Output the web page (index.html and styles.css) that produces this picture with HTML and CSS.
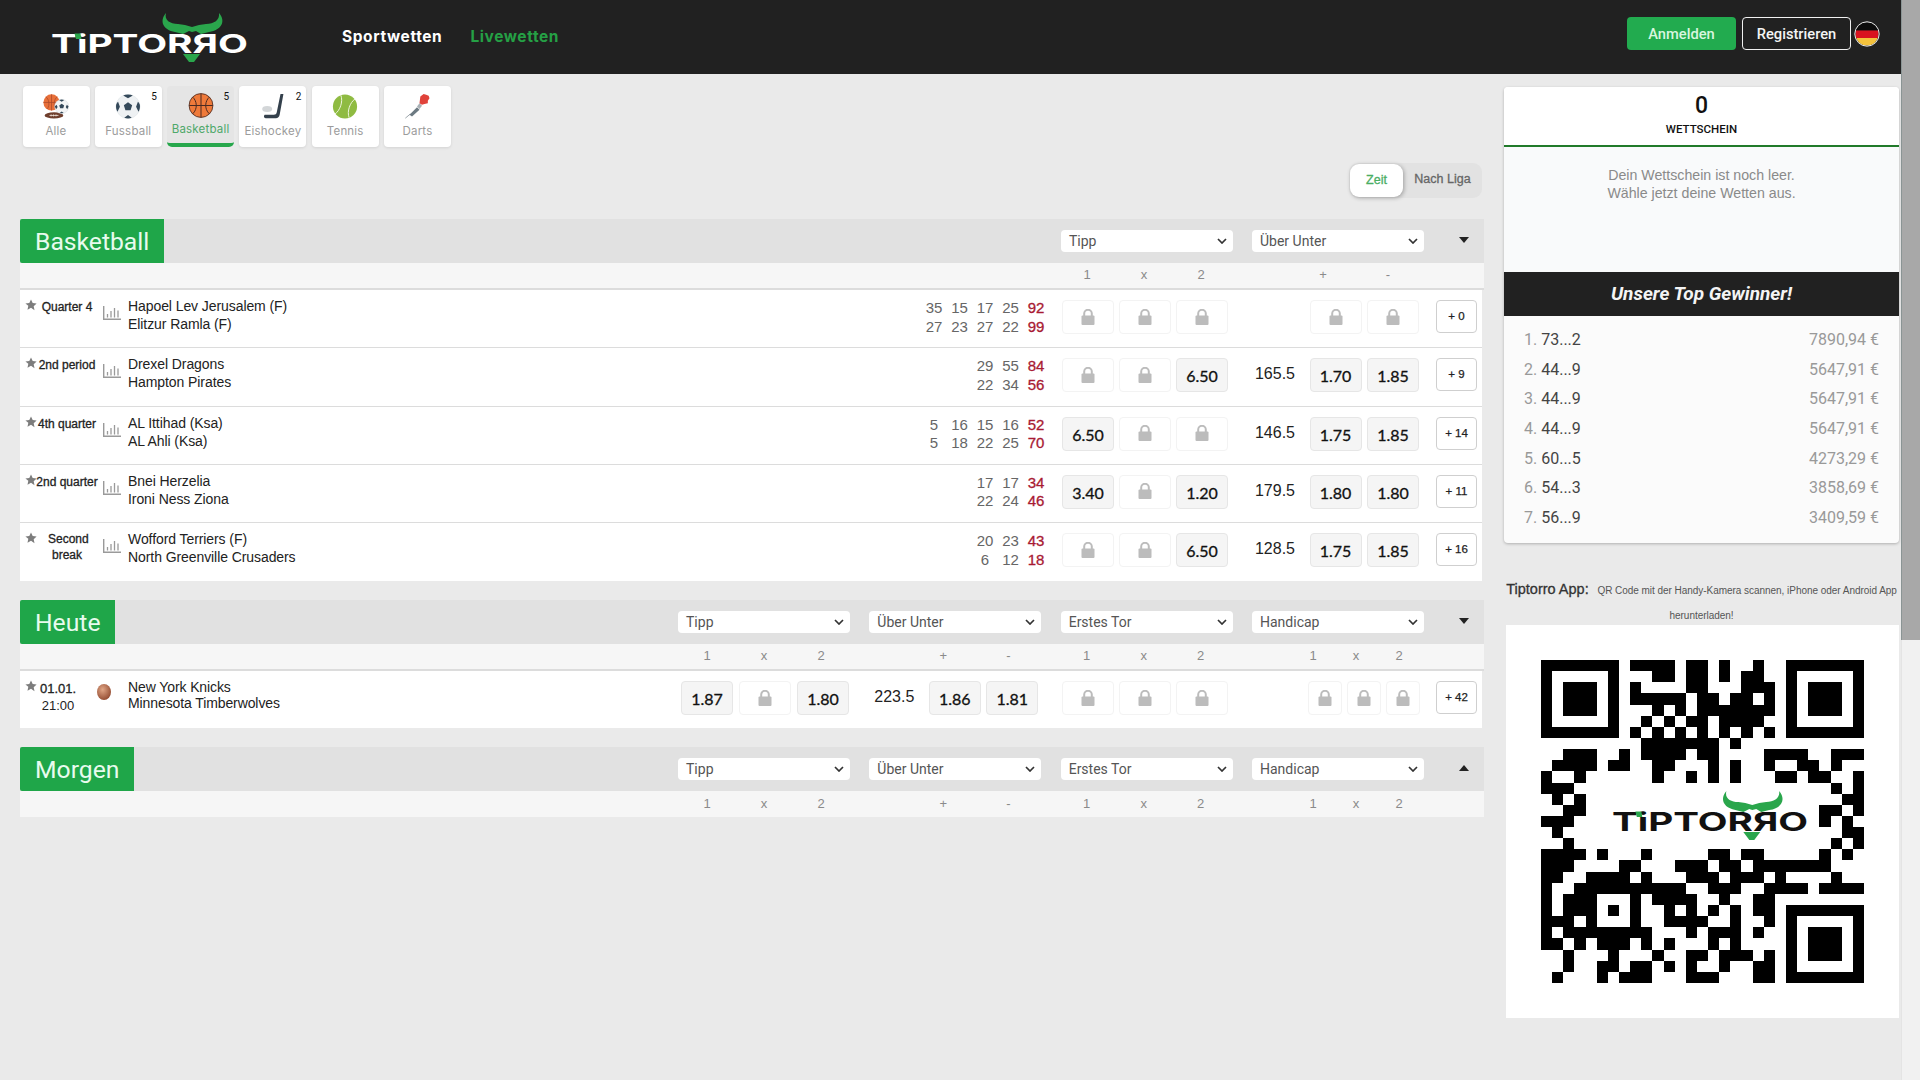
FILE: index.html
```html
<!DOCTYPE html>
<html lang="de">
<head>
<meta charset="utf-8">
<title>Tiptorro Livewetten</title>
<link rel="stylesheet" href="styles.css">
</head>
<body>
<svg class="defs" width="0" height="0">
  <defs>
    <symbol id="logo" viewBox="0 0 197 49">
      <path class="logo-green" d="M115 0C108 8 112 17 124 19L132 21L138 18L141 19L145 18L150 21L158 19C171 17 175 8 168 0C169 7 163 11 155 11L148 12L141 14L134 12L127 11C119 11 113 7 115 0Z"/>
      <text x="0" y="40" textLength="197" lengthAdjust="spacingAndGlyphs" class="logo-text">TiPTORЯO</text>
      <path class="logo-green" d="M23.500 20.500h6l1 5.500h-5.500z"/>
      <path class="logo-green" d="M132 41L149 41L143 49L138 49Z"/>
    </symbol>
    <symbol id="lock" viewBox="0 0 14 16">
      <path d="M3.200 7V4.600a3.800 3.800 0 0 1 7.600 0V7" fill="none" stroke="#bcbcbc" stroke-width="2"/>
      <rect x="0.500" y="6.500" width="13" height="9.500" rx="1" fill="#bcbcbc"/>
    </symbol>
    <symbol id="star" viewBox="0 0 12 12">
      <path d="M6 .5l1.700 3.600 3.900.5-2.900 2.700.8 3.900L6 8.800l-3.500 1.900.8-3.900L.4 4.600l3.900-.5z" fill="#7d7d7d"/>
    </symbol>
    <symbol id="stats" viewBox="0 0 18 14">
      <path d="M.7 0v13.200H18" fill="none" stroke="#9a9a9a" stroke-width="1.400"/>
      <path d="M4.500 8v3.500M8 5v6.500M11.500 2v9.500M15 4.500v7" fill="none" stroke="#9a9a9a" stroke-width="1.300"/>
    </symbol>
    <symbol id="chev" viewBox="0 0 10 6">
      <path d="M1 1l4 4 4-4" fill="none" stroke="#333" stroke-width="1.700"/>
    </symbol>
  </defs>
</svg>
<div class="page">
  <header class="topbar">
    <svg class="logo"><use href="#logo"/></svg>
    <nav class="nav">
      <a class="nav-link">Sportwetten</a>
      <a class="nav-link nav-live">Livewetten</a>
    </nav>
    <div class="actions">
      <button class="btn btn-login">Anmelden</button>
      <button class="btn btn-register">Registrieren</button>
      <svg class="flag" viewBox="0 0 26 26">
        <clipPath id="flagclip"><circle cx="13" cy="13" r="11.500"/></clipPath>
        <g clip-path="url(#flagclip)">
          <rect width="26" height="9.500" fill="#0b0b0b"/>
          <rect y="9.500" width="26" height="7.500" fill="#d9121f"/>
          <rect y="17" width="26" height="9" fill="#f4c23c"/>
        </g>
        <circle cx="13" cy="13" r="12.200" fill="none" stroke="#e8e8e8" stroke-width="1"/>
      </svg>
    </div>
  </header>
  <div class="content">
    <main class="main">
      <div class="tabs">
        <div class="tab">
          <svg class="tab-icon" viewBox="0 0 32 30">
            <circle cx="10.500" cy="10" r="10" fill="#e8703a"/>
            <path d="M.5 10h20M10.500 0v20M3.500 3c4 3 5 10 2 15M17.500 3c-4 3-5 10-2 15" fill="none" stroke="#a8492a" stroke-width=".9"/>
            <ellipse cx="13.500" cy="26" rx="11.500" ry="3.800" fill="#6f3f2d"/>
            <path d="M8 26h11M10 24.800v2.400M13 24.800v2.400M16 24.800v2.400" stroke="#f1e5dc" stroke-width="1"/>
            <circle cx="23" cy="15" r="8.700" fill="#f3f5f6" stroke="#cfd6da" stroke-width=".5"/>
            <path d="M23 11.500l3 2.200-1.100 3.500h-3.800l-1.100-3.500zM23 6.400l3.200.7-3.200 2-3.200-2zM31.500 15l-1.700 3.500-1.800-3 1.400-2.800zM14.500 15l1.700 3.500 1.800-3-1.400-2.800zM20.500 22.900l2.500-1.900 2.500 1.900-2.500.5z" fill="#34495a"/>
          </svg>
          <span class="tab-label">Alle</span>
        </div>
        <div class="tab">
          <svg class="tab-icon" viewBox="0 0 30 30">
            <circle cx="15" cy="15" r="14.500" fill="#eef1f3" stroke="#dfe4e7" stroke-width=".6"/>
            <path d="M15 10l5 3.600-1.900 5.800h-6.200L10 13.600zM15 .7c2.200 0 4.200.4 5.800 1.200L15 5 9.200 1.900C10.800 1.100 12.800.7 15 .7zM29.300 13.500c.3 2.900-.3 5.600-1.700 7.900l-2.900-6 2.200-6c1.400 1.300 2.200 2.800 2.400 4.100zM.7 13.500c-.3 2.900.3 5.600 1.700 7.900l2.900-6-2.200-6C1.700 10.700.9 12.200.7 13.500zM10.500 28.600l4.500-3.300 4.500 3.300c-2.900.9-6.100.9-9 0z" fill="#34495a"/>
          </svg>
          <span class="tab-label">Fussball</span>
          <span class="tab-count">5</span>
        </div>
        <div class="tab tab-active">
          <svg class="tab-icon" viewBox="0 0 30 30">
            <circle cx="15" cy="15" r="14.300" fill="#ef7a3a" stroke="#4a2a22" stroke-width="1"/>
            <path d="M.8 15h28.400M15 .8v28.400M5 5c5 4 6.500 14 0 20M25 5c-5 4-6.500 14 0 20" fill="none" stroke="#4a2a22" stroke-width="1.200"/>
          </svg>
          <span class="tab-label">Basketball</span>
          <span class="tab-count">5</span>
        </div>
        <div class="tab">
          <svg class="tab-icon" viewBox="0 0 30 30">
            <path d="M24 0h3.500L23 25c-.5 2.700-2.200 4-4.500 4H6.500c-2 0-3-1.500-2-3.500L5 25H16c2 0 3-.8 3.500-3z" fill="#34404c"/>
            <ellipse cx="8" cy="18" rx="6" ry="3.500" fill="#d3d6d8"/>
          </svg>
          <span class="tab-label">Eishockey</span>
          <span class="tab-count">2</span>
        </div>
        <div class="tab">
          <svg class="tab-icon" viewBox="0 0 30 30">
            <circle cx="15" cy="15" r="14.500" fill="#8fbb42"/>
            <path d="M3 24C9 20 13 9 10 1.500M27 6C21 10 17 21 20 28.500" fill="none" stroke="#eef5dd" stroke-width="1.200"/>
          </svg>
          <span class="tab-label">Tennis</span>
        </div>
        <div class="tab">
          <svg class="tab-icon" viewBox="0 0 30 30">
            <path d="M1 29l6-5" stroke="#8a949a" stroke-width="1"/>
            <path d="M6 25l9-9 3 3-9 8z" fill="#6c7a82"/>
            <path d="M15 15l3-4 3 3-3 4z" fill="#a8b0b5"/>
            <path d="M18 11l1-8 4-3 3 1 3 1 1 3-2 3v3l-4 1-3 1z" fill="#e0423a"/>
          </svg>
          <span class="tab-label">Darts</span>
        </div>
      </div>

      <div class="sort-row">
        <div class="toggle">
          <span class="toggle-on">Zeit</span>
          <span class="toggle-off">Nach Liga</span>
        </div>
      </div>

      <section class="section">
        <div class="sec-head">
          <h2 class="sec-title">Basketball</h2>
          <div class="markets">
            <div class="select"><span>Tipp</span><svg class="chev"><use href="#chev"/></svg></div>
            <div class="select"><span>Über Unter</span><svg class="chev"><use href="#chev"/></svg></div>
          </div>
          <span class="caret"></span>
        </div>
        <div class="sec-sub sub-line">
          <div class="markets">
            <div class="labels-3"><span>1</span><span>x</span><span>2</span></div>
            <div class="labels-ou"><span>+</span><span>-</span></div>
          </div>
        </div>

        <div class="row">
          <svg class="star"><use href="#star"/></svg>
          <div class="status">Quarter 4</div>
          <svg class="stats"><use href="#stats"/></svg>
          <div class="teams"><div>Hapoel Lev Jerusalem (F)</div><div>Elitzur Ramla (F)</div></div>
          <div class="scores">
            <div class="sc"><span>35</span><span>27</span></div>
            <div class="sc"><span>15</span><span>23</span></div>
            <div class="sc"><span>17</span><span>27</span></div>
            <div class="sc"><span>25</span><span>22</span></div>
            <div class="sc sc-total"><span>92</span><span>99</span></div>
          </div>
          <div class="markets">
            <div class="cells-3">
              <div class="cell"><svg class="lock"><use href="#lock"/></svg></div>
              <div class="cell"><svg class="lock"><use href="#lock"/></svg></div>
              <div class="cell"><svg class="lock"><use href="#lock"/></svg></div>
            </div>
            <div class="cells-ou">
              <div class="line"></div>
              <div class="cell"><svg class="lock"><use href="#lock"/></svg></div>
              <div class="cell"><svg class="lock"><use href="#lock"/></svg></div>
            </div>
          </div>
          <div class="more">+ 0</div>
        </div>

        <div class="row">
          <svg class="star"><use href="#star"/></svg>
          <div class="status">2nd period</div>
          <svg class="stats"><use href="#stats"/></svg>
          <div class="teams"><div>Drexel Dragons</div><div>Hampton Pirates</div></div>
          <div class="scores">
            <div class="sc"><span>29</span><span>22</span></div>
            <div class="sc"><span>55</span><span>34</span></div>
            <div class="sc sc-total"><span>84</span><span>56</span></div>
          </div>
          <div class="markets">
            <div class="cells-3">
              <div class="cell"><svg class="lock"><use href="#lock"/></svg></div>
              <div class="cell"><svg class="lock"><use href="#lock"/></svg></div>
              <div class="cell odd">6.50</div>
            </div>
            <div class="cells-ou">
              <div class="line">165.5</div>
              <div class="cell odd">1.70</div>
              <div class="cell odd">1.85</div>
            </div>
          </div>
          <div class="more">+ 9</div>
        </div>

        <div class="row">
          <svg class="star"><use href="#star"/></svg>
          <div class="status">4th quarter</div>
          <svg class="stats"><use href="#stats"/></svg>
          <div class="teams"><div>AL Ittihad (Ksa)</div><div>AL Ahli (Ksa)</div></div>
          <div class="scores">
            <div class="sc"><span>5</span><span>5</span></div>
            <div class="sc"><span>16</span><span>18</span></div>
            <div class="sc"><span>15</span><span>22</span></div>
            <div class="sc"><span>16</span><span>25</span></div>
            <div class="sc sc-total"><span>52</span><span>70</span></div>
          </div>
          <div class="markets">
            <div class="cells-3">
              <div class="cell odd">6.50</div>
              <div class="cell"><svg class="lock"><use href="#lock"/></svg></div>
              <div class="cell"><svg class="lock"><use href="#lock"/></svg></div>
            </div>
            <div class="cells-ou">
              <div class="line">146.5</div>
              <div class="cell odd">1.75</div>
              <div class="cell odd">1.85</div>
            </div>
          </div>
          <div class="more">+ 14</div>
        </div>

        <div class="row">
          <svg class="star"><use href="#star"/></svg>
          <div class="status">2nd quarter</div>
          <svg class="stats"><use href="#stats"/></svg>
          <div class="teams"><div>Bnei Herzelia</div><div>Ironi Ness Ziona</div></div>
          <div class="scores">
            <div class="sc"><span>17</span><span>22</span></div>
            <div class="sc"><span>17</span><span>24</span></div>
            <div class="sc sc-total"><span>34</span><span>46</span></div>
          </div>
          <div class="markets">
            <div class="cells-3">
              <div class="cell odd">3.40</div>
              <div class="cell"><svg class="lock"><use href="#lock"/></svg></div>
              <div class="cell odd">1.20</div>
            </div>
            <div class="cells-ou">
              <div class="line">179.5</div>
              <div class="cell odd">1.80</div>
              <div class="cell odd">1.80</div>
            </div>
          </div>
          <div class="more">+ 11</div>
        </div>

        <div class="row row-last">
          <svg class="star"><use href="#star"/></svg>
          <div class="status status-wrap">Second break</div>
          <svg class="stats"><use href="#stats"/></svg>
          <div class="teams"><div>Wofford Terriers (F)</div><div>North Greenville Crusaders</div></div>
          <div class="scores">
            <div class="sc"><span>20</span><span>6</span></div>
            <div class="sc"><span>23</span><span>12</span></div>
            <div class="sc sc-total"><span>43</span><span>18</span></div>
          </div>
          <div class="markets">
            <div class="cells-3">
              <div class="cell"><svg class="lock"><use href="#lock"/></svg></div>
              <div class="cell"><svg class="lock"><use href="#lock"/></svg></div>
              <div class="cell odd">6.50</div>
            </div>
            <div class="cells-ou">
              <div class="line">128.5</div>
              <div class="cell odd">1.75</div>
              <div class="cell odd">1.85</div>
            </div>
          </div>
          <div class="more">+ 16</div>
        </div>
      </section>

      <section class="section section-heute">
        <div class="sec-head">
          <h2 class="sec-title">Heute</h2>
          <div class="markets">
            <div class="select"><span>Tipp</span><svg class="chev"><use href="#chev"/></svg></div>
            <div class="select"><span>Über Unter</span><svg class="chev"><use href="#chev"/></svg></div>
            <div class="select"><span>Erstes Tor</span><svg class="chev"><use href="#chev"/></svg></div>
            <div class="select"><span>Handicap</span><svg class="chev"><use href="#chev"/></svg></div>
          </div>
          <span class="caret"></span>
        </div>
        <div class="sec-sub sub-line">
          <div class="markets">
            <div class="labels-3 shift"><span>1</span><span>x</span><span>2</span></div>
            <div class="labels-ou shift"><span>+</span><span>-</span></div>
            <div class="labels-3"><span>1</span><span>x</span><span>2</span></div>
            <div class="labels-hc"><span>1</span><span>x</span><span>2</span></div>
          </div>
        </div>
        <div class="row row-last row-today">
          <svg class="star"><use href="#star"/></svg>
          <div class="status status-date"><b>01.01.</b><br>21:00</div>
          <svg class="ball" viewBox="0 0 14 16">
            <defs><radialGradient id="ballgrad" cx=".4" cy=".35" r=".7"><stop offset="0" stop-color="#e0a585"/><stop offset="1" stop-color="#91492f"/></radialGradient></defs>
            <ellipse cx="7" cy="8" rx="7" ry="8" fill="url(#ballgrad)"/>
          </svg>
          <div class="teams"><div>New York Knicks</div><div>Minnesota Timberwolves</div></div>
          <div class="markets">
            <div class="cells-3 cells-shift">
              <div class="cell odd">1.87</div>
              <div class="cell"><svg class="lock"><use href="#lock"/></svg></div>
              <div class="cell odd">1.80</div>
            </div>
            <div class="cells-ou cells-shift-ou">
              <div class="line">223.5</div>
              <div class="cell odd">1.86</div>
              <div class="cell odd">1.81</div>
            </div>
            <div class="cells-3">
              <div class="cell"><svg class="lock"><use href="#lock"/></svg></div>
              <div class="cell"><svg class="lock"><use href="#lock"/></svg></div>
              <div class="cell"><svg class="lock"><use href="#lock"/></svg></div>
            </div>
            <div class="cells-hc">
              <div class="cell"><svg class="lock"><use href="#lock"/></svg></div>
              <div class="cell"><svg class="lock"><use href="#lock"/></svg></div>
              <div class="cell"><svg class="lock"><use href="#lock"/></svg></div>
            </div>
          </div>
          <div class="more">+ 42</div>
        </div>
      </section>

      <section class="section section-morgen">
        <div class="sec-head">
          <h2 class="sec-title">Morgen</h2>
          <div class="markets">
            <div class="select"><span>Tipp</span><svg class="chev"><use href="#chev"/></svg></div>
            <div class="select"><span>Über Unter</span><svg class="chev"><use href="#chev"/></svg></div>
            <div class="select"><span>Erstes Tor</span><svg class="chev"><use href="#chev"/></svg></div>
            <div class="select"><span>Handicap</span><svg class="chev"><use href="#chev"/></svg></div>
          </div>
          <span class="caret caret-up"></span>
        </div>
        <div class="sec-sub">
          <div class="markets">
            <div class="labels-3 shift"><span>1</span><span>x</span><span>2</span></div>
            <div class="labels-ou shift"><span>+</span><span>-</span></div>
            <div class="labels-3"><span>1</span><span>x</span><span>2</span></div>
            <div class="labels-hc"><span>1</span><span>x</span><span>2</span></div>
          </div>
        </div>
      </section>
    </main>

    <aside class="sidebar">
      <div class="card">
        <div class="slip-head">
          <div class="slip-count">0</div>
          <div class="slip-title">WETTSCHEIN</div>
        </div>
        <div class="slip-body">Dein Wettschein ist noch leer.<br>Wähle jetzt deine Wetten aus.</div>
        <div class="win-head">Unsere Top Gewinner!</div>
        <ol class="win-list">
          <li><span><i>1.</i> 73...2</span><em>7890,94 €</em></li>
          <li><span><i>2.</i> 44...9</span><em>5647,91 €</em></li>
          <li><span><i>3.</i> 44...9</span><em>5647,91 €</em></li>
          <li><span><i>4.</i> 44...9</span><em>5647,91 €</em></li>
          <li><span><i>5.</i> 60...5</span><em>4273,29 €</em></li>
          <li><span><i>6.</i> 54...3</span><em>3858,69 €</em></li>
          <li><span><i>7.</i> 56...9</span><em>3409,59 €</em></li>
        </ol>
      </div>
      <p class="app-text"><strong>Tiptorro App:</strong> QR Code mit der Handy-Kamera scannen, iPhone oder Android App herunterladen!</p>
      <div class="qr">
        <svg class="qr-code" viewBox="0 0 29 29">
          <path fill="none" stroke="#000" d="M.5.5h6v6h-6zM22.500.5h6v6h-6zM22.500 22.500h6v6h-6z"/>
          <path d="M2 2h3v3h-3zM24 2h3v3h-3zM24 24h3v3h-3z"/>
          <path fill="none" stroke="#000" d="M8 .5h4M13 .5h2M16 .5h1M19 .5h1
          M10 1.500h2M13 1.500h2M16 1.500h1M18 1.500h2
          M8 2.500h1M13 2.500h2M18 2.500h3
          M8 3.500h5M14 3.500h2M17 3.500h2M20 3.500h1
          M10 4.500h1M12 4.500h1M14 4.500h3M17 4.500h4
          M9 5.500h1M11 5.500h1M13 5.500h2M16 5.500h4
          M8 6.500h1M10 6.500h1M12 6.500h1M14 6.500h1M16 6.500h1M18 6.500h1M20 6.500h1
          M9 7.500h7M17 7.500h1
          M2 8.500h3M7 8.500h1M9 8.500h4M14 8.500h2M20 8.500h4M26 8.500h3
          M1 9.500h4M6 9.500h2M10 9.500h2M15 9.500h1M17 9.500h1M20 9.500h1M23 9.500h2M26 9.500h1
          M0 10.500h1M3 10.500h1M10 10.500h1M13 10.500h1M15 10.500h1M17 10.500h1M21 10.500h2M24 10.500h2M28 10.500h1
          M0 11.500h3M26 11.500h1M28 11.500h1
          M1 12.500h1M3 12.500h1M27 12.500h2
          M2 13.500h2M25 13.500h2M28 13.500h1
          M0 14.500h3M25 14.500h1M27 14.500h1
          M1 15.500h1M27 15.500h2
          M2 16.500h1M26 16.500h1M28 16.500h1
          M0 17.500h4M5 17.500h1M9 17.500h1M15 17.500h2M18 17.500h2M25 17.500h1M27 17.500h1
          M0 18.500h3M7 18.500h2M12 18.500h3M16 18.500h2M19 18.500h7
          M0 19.500h2M4 19.500h4M9 19.500h1M13 19.500h3M17 19.500h3M21 19.500h1M26 19.500h1
          M0 20.500h1M3 20.500h10M15 20.500h3M20 20.500h4M25 20.500h4
          M0 21.500h1M2 21.500h3M8 21.500h1M10 21.500h4M16 21.500h1M19 21.500h2
          M0 22.500h1M2 22.500h3M6 22.500h1M8 22.500h1M11 22.500h1M13 22.500h1M15 22.500h1M17 22.500h1M19 22.500h2
          M0 23.500h3M4 23.500h1M8 23.500h1M11 23.500h4M17 23.500h1M20 23.500h1
          M0 24.500h1M2 24.500h8M13 24.500h1M15 24.500h3M19 24.500h1
          M0 25.500h2M3 25.500h1M5 25.500h3M9 25.500h1M11 25.500h1M15 25.500h1M17 25.500h1
          M2 26.500h1M6 26.500h1M10 26.500h1M13 26.500h2M16 26.500h3M20 26.500h1
          M2 27.500h1M5 27.500h2M8 27.500h2M11 27.500h1M13 27.500h1M16 27.500h1M19 27.500h2
          M1 28.500h1M5 28.500h1M7 28.500h3M13 28.500h3M19 28.500h2"/>
        </svg>
        <svg class="qr-logo"><use href="#logo"/></svg>
      </div>
    </aside>
  </div>
</div>
<div class="scrollbar"><div class="thumb"></div></div>
</body>
</html>
```
FILE: styles.css
```css
* { box-sizing: border-box; }
html, body { margin: 0; padding: 0; height: 100%; }
body {
  display: flex;
  height: 1080px;
  overflow: hidden;
  background: #eaeaea;
  font-family: "Liberation Sans", Arial, sans-serif;
  color: #222;
}
.defs { position: absolute; }
.page { flex: 1; min-width: 0; }
.scrollbar { width: 19px; background: #f1f1f1; border-left: 1px solid #e4e4e4; }
.thumb { height: 640px; background: #a8a8a8; margin-left: -1px; border-left: 1px solid #8a9494; }

.topbar { height: 74px; background: #212121; display: flex; align-items: flex-start; }
.logo { width: 197px; height: 49px; margin: 13px 0 0 51px; flex: none; color: #fff; }
.logo-green { fill: #2aa64c; }
.logo-text { font-family: Inter, sans-serif; font-weight: 700; font-size: 25.500px; fill: currentColor; }
.nav { display: flex; gap: 28px; margin: 27px 0 0 94px; }
.nav-link { font-family: Inter, sans-serif; font-weight: 700; font-size: 15.500px; line-height: 20px; letter-spacing: .6px; color: #fff; }
.nav-live { color: #25a045; }
.actions { margin-left: auto; display: flex; align-items: center; gap: 6px; padding: 17px 21px 0 0; }
.btn { height: 33px; width: 109px; border-radius: 4px; font-family: Roboto, sans-serif; font-weight: 500; font-size: 14.700px; padding: 0; }
.btn-login { background: #22ab4f; border: 0; color: #d8f6df; }
.btn-register { background: #212121; border: 1px solid #f0f0f0; color: #f4f4f4; }
.flag { width: 26px; height: 26px; margin-left: -3px; }

.content { display: flex; padding-left: 20px; gap: 20px; }
.main { width: 1464px; flex: none; }

.tabs { display: flex; gap: 5.300px; margin: 12px 0 0 2.500px; }
.tab { position: relative; width: 67px; height: 61px; background: #fff; border-radius: 4px; box-shadow: 0 1px 3px rgba(0,0,0,.1); display: flex; flex-direction: column; align-items: center; padding-top: 8px; }
.tab-icon { width: 26px; height: 25px; flex: none; }
.tab-label { font-family: Inter, sans-serif; font-size: 11.500px; letter-spacing: .2px; line-height: 14px; margin-top: 5px; color: #9c9c9c; }
.tab-count { position: absolute; top: 5px; right: 5px; font-family: Roboto, sans-serif; font-size: 10px; line-height: 12px; color: #111; }
.tab-active { background: #e5e5e5; box-shadow: none; padding-top: 7px; border-bottom: 4px solid #27a74c; border-radius: 4px 4px 5px 5px; }
.tab-active .tab-label { color: #4ea86a; margin-top: 4px; }

.sort-row { display: flex; justify-content: flex-end; margin: 16px 2px 0 0; }
.toggle { display: flex; height: 35px; width: 133px; background: #e2e2e2; border-radius: 9px; }
.toggle-on { width: 53px; height: 33px; margin: 1px 0 0 1px; background: #fff; border-radius: 9px; box-shadow: 1px 1px 4px rgba(0,0,0,.3); color: #4aae64; font-size: 12.500px; line-height: 32px; text-align: center; -webkit-text-stroke: .3px; }
.toggle-off { flex: 1; color: #666; font-size: 12.500px; line-height: 33px; text-align: center; -webkit-text-stroke: .3px; }

.section { margin-top: 21px; }
.section-heute { margin-top: 19.500px; }
.section-morgen { margin-top: 19px; }
.section-heute .markets, .section-morgen .markets { gap: 19.330px; }
.sec-head { height: 44px; background: #e1e1e1; display: flex; align-items: center; justify-content: space-between; }
.sec-title { margin: 0; height: 44px; padding: 0 15px; background: #1fa649; color: #e8fbee; font-family: Roboto, sans-serif; font-weight: 400; font-size: 24.700px; line-height: 45px; border-radius: 2px 0 0 2px; }
.markets { display: flex; gap: 19px; margin-left: auto; }
.select { width: 172px; height: 22px; background: #fff; border-radius: 4px; display: flex; align-items: center; justify-content: space-between; padding: 0 6px 0 8px; font-family: Roboto, sans-serif; font-size: 14px; color: #555; }
.chev { width: 10px; height: 6px; }
.caret { width: 0; height: 0; margin: -3px 15px 0 35px; border: 5px solid transparent; border-top: 6px solid #222; border-bottom: 0; flex: none; }
.caret-up { border-top: 0; border-bottom: 6px solid #222; }

.sec-sub { height: 26px; background: #f6f6f6; display: flex; padding: 0 60px 2px 0; align-items: center; font-size: 13px; color: #8a8a8a; }
.sub-line { height: 27px; border-bottom: 2px solid #dcdcdc; }
.labels-3 { width: 172px; display: grid; grid-template-columns: repeat(3, 52px); column-gap: 5px; text-align: center; }
.labels-3.shift { padding-left: 3px; }
.labels-ou { width: 172px; display: flex; padding-left: 61px; gap: 45px; text-align: center; }
.labels-ou span { width: 20px; }
.labels-ou.shift { padding-left: 64px; }
.labels-hc { width: 172px; display: grid; grid-template-columns: repeat(3, 43px); padding-left: 39.500px; text-align: center; }

.row { height: 58.250px; margin-right: 2px; padding: 10px 5px 0 0; background: #fff; border-bottom: 1px solid #dcdcdc; display: flex; align-items: flex-start; }
.row-last { height: 57.500px; border-bottom: 0; }
.row-today { height: 57px; }
.star { width: 12px; height: 12px; margin: -1px -1px 0 5px; flex: none; }
.status { width: 62px; flex: none; margin-top: -1px; text-align: center; font-size: 12px; line-height: 16px; color: #222; -webkit-text-stroke: .3px; white-space: nowrap; }
.status-wrap { white-space: normal; padding: 0 12px; margin-top: -2px; }
.status-date { width: 44px; font-size: 13px; line-height: 17px; margin-top: -1px; -webkit-text-stroke: 0; }
.status-date b { font-weight: 400; -webkit-text-stroke: .3px; }
.stats { width: 18px; height: 14px; margin: 6px 0 0 5px; flex: none; }
.ball { width: 14px; height: 16px; margin: 3px 0 0 16.500px; flex: none; }
.teams { margin: -3px 0 0 7px; font-size: 14px; line-height: 18px; letter-spacing: -.08px; color: #222; }
.row-today .teams { margin-top: -2px; margin-left: 17.500px; line-height: 16px; letter-spacing: -.1px; }
.scores { margin: -1px 15px 0 auto; display: flex; gap: 5.500px; font-size: 15px; line-height: 18.500px; color: #666; }
.scores + .markets { margin-left: 0; }
.sc { width: 20px; display: flex; flex-direction: column; align-items: center; }
.sc-total { color: #a81a33; -webkit-text-stroke: .3px; }

.cells-3 { width: 172px; display: grid; grid-template-columns: repeat(3, 52px); column-gap: 5px; padding-left: 1px; }
.cells-shift { padding-left: 3px; column-gap: 6px; }
.cells-ou { width: 172px; display: grid; grid-template-columns: repeat(3, 52px); column-gap: 5.500px; }
.cells-shift-ou { padding-left: 2px; }
.cells-hc { width: 172px; display: grid; grid-template-columns: repeat(3, 34px); column-gap: 5px; padding-left: 56px; }
.cell { height: 34px; border: 1px solid #f3f3f3; border-radius: 4px; display: flex; align-items: center; justify-content: center; }
.lock { width: 14px; height: 16px; margin-top: -1px; }
.odd { background: #f5f5f5; border-color: #e6e6e6; font-family: Lato, sans-serif; font-size: 16px; color: #111; padding-top: 1px; -webkit-text-stroke: .3px; }
.line { font-size: 16px; line-height: 32px; padding-right: 6px; text-align: center; color: #222; }
.more { width: 41px; height: 33px; margin-left: 12px; flex: none; border: 1px solid #cfcfcf; border-radius: 4px; font-size: 11.500px; line-height: 31px; text-align: center; color: #222; -webkit-text-stroke: .25px; }

.sidebar { width: 395px; flex: none; margin-top: 13px; }
.card { background: #fbfbfb; border-radius: 4px; box-shadow: 0 1px 3px rgba(0,0,0,.25); overflow: hidden; height: 456px; }
.slip-head { height: 60px; background: #fff; border-bottom: 2px solid #217a2a; text-align: center; padding-top: 6px; }
.slip-count { font-family: Roboto, sans-serif; font-weight: 500; font-size: 23px; line-height: 26px; color: #111; }
.slip-title { font-family: Roboto, sans-serif; font-weight: 500; font-size: 11.500px; line-height: 14px; margin-top: 3px; color: #111; }
.slip-body { height: 125px; background: #f9fafb; padding-top: 19px; text-align: center; font-size: 14.200px; line-height: 18px; color: #8a8a8a; }
.win-head { height: 44px; background: #212121; color: #f4f4f4; text-align: center; font-family: Roboto, sans-serif; font-style: italic; font-weight: 700; font-size: 19px; line-height: 43px; }
.win-list { list-style: none; margin: 0; padding: 9px 20px 0; font-family: Roboto, sans-serif; font-size: 16px; color: #444; }
.win-list li { display: flex; justify-content: space-between; height: 29.700px; line-height: 29.700px; }
.win-list i { font-style: normal; color: #999; }
.win-list em { font-style: normal; color: #999; }

.app-text { margin: 34px 0 0; height: 48px; text-align: center; font-size: 10px; letter-spacing: -.04px; line-height: 25px; color: #555; }
.app-text strong { font-weight: 400; font-size: 14.500px; letter-spacing: 0; color: #333; -webkit-text-stroke: .3px; margin-right: 6px; }
.qr { position: relative; width: 393px; height: 393px; margin-left: 2px; background: #fff; padding: 35px; }
.qr-code { display: block; width: 323px; height: 323px; shape-rendering: crispEdges; }
.qr-logo { position: absolute; left: 106px; top: 166px; width: 196px; height: 49px; color: #111; }
```
